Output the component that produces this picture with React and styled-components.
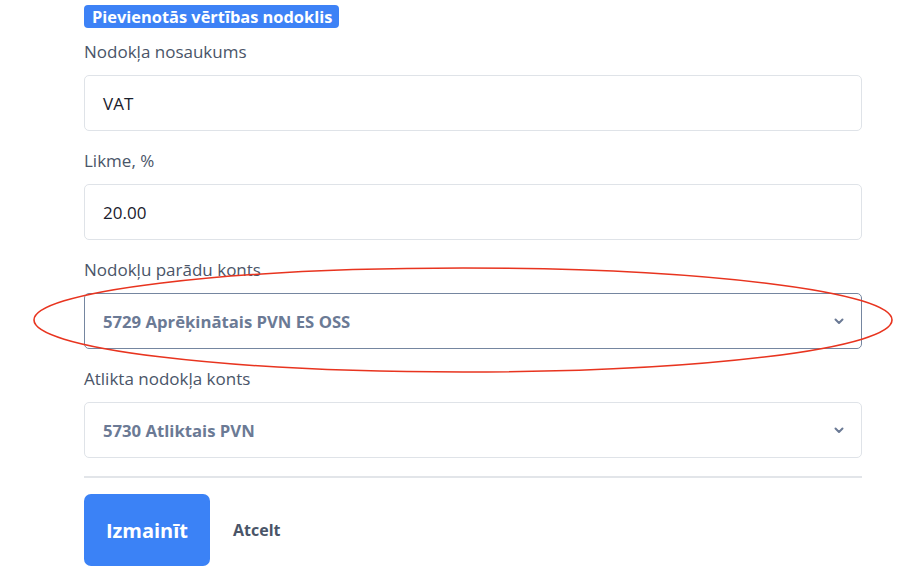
import styled, { createGlobalStyle } from 'styled-components';

const GlobalStyle = createGlobalStyle`
  html, body {
    margin: 0;
    padding: 0;
    background: #ffffff;
  }
  body {
    font-family: "Open Sans", "Noto Sans", sans-serif;
  }
`;

const Page = styled.div`
  position: relative;
  width: 904px;
  height: 584px;
  overflow: hidden;
  box-sizing: border-box;
  padding: 5px 42px 0 84px;
`;

const Form = styled.form`
  display: flex;
  flex-direction: column;
  width: 778px;
`;

const Badge = styled.span`
  align-self: flex-start;
  background: #3d82f6;
  color: #ffffff;
  font-weight: 700;
  font-size: 16.4px;
  line-height: 23px;
  padding: 0 7px 0 8px;
  border-radius: 4px;
`;

const Field = styled.div`
  display: flex;
  flex-direction: column;
  margin-top: ${p => p.$first ? '12px' : '18px'};
`;

const Label = styled.label`
  font-size: 17px;
  line-height: 24px;
  color: #4a5568;
  margin-bottom: 11px;
`;

const Input = styled.div`
  box-sizing: border-box;
  height: 56px;
  border: 1px solid #dfe3e8;
  border-radius: 5px;
  padding: 0 18px;
  display: flex;
  align-items: center;
  font-size: 17px;
  color: #1a202c;
`;

const Select = styled(Input)`
  justify-content: space-between;
  border-color: ${p => p.$focused ? '#7586a0' : '#dfe3e8'};
  color: #6b7a95;
  font-weight: 700;
  font-size: 16.7px;
  padding-right: 16px;
`;

const Chevron = () => (
  <svg width="12" height="12" viewBox="0 0 12 12">
    <path d="M2.5 4.5 L6 8 L9.5 4.5" fill="none" stroke="#6b7a95" strokeWidth="2" strokeLinecap="round" strokeLinejoin="round" />
  </svg>
);

const Divider = styled.hr`
  border: 0;
  border-top: 2px solid #e2e5e9;
  margin: 18px 0 16px;
  width: 100%;
`;

const Actions = styled.div`
  display: flex;
  align-items: center;
  gap: 23px;
`;

const PrimaryButton = styled.button`
  font-family: inherit;
  background: #3b82f6;
  color: #ffffff;
  border: 0;
  border-radius: 7px;
  width: 126px;
  height: 72px;
  font-size: 20px;
  font-weight: 700;
`;

const LinkButton = styled.button`
  font-family: inherit;
  background: none;
  border: 0;
  padding: 0;
  color: #4a5568;
  font-size: 16px;
  font-weight: 700;
`;

const Annotation = styled.svg`
  position: absolute;
  left: 0;
  top: 0;
  pointer-events: none;
`;

export default function App() {
  return (
    <Page>
      <GlobalStyle />
      <Form>
        <Badge>Pievienotās vērtības nodoklis</Badge>
        <Field $first>
          <Label>Nodokļa nosaukums</Label>
          <Input>VAT</Input>
        </Field>
        <Field>
          <Label>Likme, %</Label>
          <Input>20.00</Input>
        </Field>
        <Field>
          <Label>Nodokļu parādu konts</Label>
          <Select $focused>5729 Aprēķinātais PVN ES OSS<Chevron /></Select>
        </Field>
        <Field>
          <Label>Atlikta nodokļa konts</Label>
          <Select>5730 Atliktais PVN<Chevron /></Select>
        </Field>
        <Divider />
        <Actions>
          <PrimaryButton type="button">Izmainīt</PrimaryButton>
          <LinkButton type="button">Atcelt</LinkButton>
        </Actions>
      </Form>
      <Annotation width="904" height="584">
        <ellipse cx="463" cy="320" rx="429" ry="52" fill="none" stroke="#e8341f" strokeWidth="1.6" />
      </Annotation>
    </Page>
  );
}
